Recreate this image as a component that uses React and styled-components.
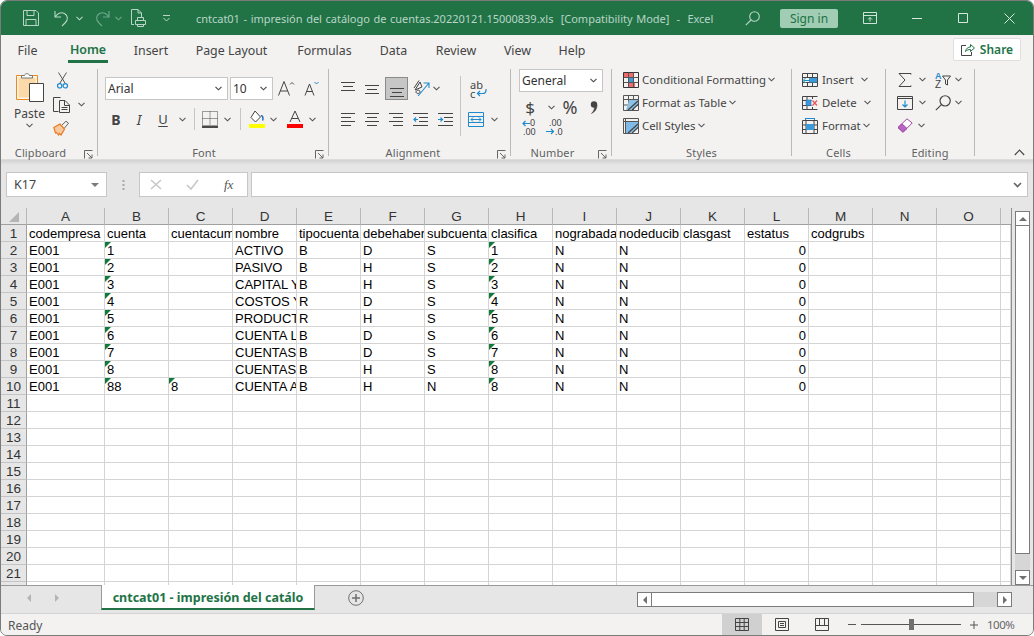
import React from 'react';
import styled, { createGlobalStyle } from 'styled-components';

const Global = createGlobalStyle`
html,body{margin:0;padding:0;background:#fff;}
body{font-family:"Noto Sans","Open Sans","Liberation Sans",sans-serif;}
*{box-sizing:border-box;}
svg{display:block;flex:none;overflow:visible;}
`;

const Win = styled.div`
width:1034px;height:636px;display:flex;flex-direction:column;overflow:hidden;
border:1px solid #7b7b7b;border-radius:7px;background:#e6e6e6;
`;

/* title bar */
const TitleBar = styled.div`
height:34px;background:#217346;display:flex;align-items:center;color:#b8d5c6;flex:none;
`;
const Qat = styled.div`width:195px;height:100%;display:flex;align-items:center;flex:none;padding-left:${p=>p.$pl}px;`;
const QatSlot = styled.div`
width:${p=>p.$w}px;display:flex;align-items:center;justify-content:center;gap:${p=>p.$gap||0}px;flex:none;margin-left:${p=>p.$ml||0}px;
`;
const TitleText = styled.div`font-size:11px;white-space:pre;width:545px;flex:none;letter-spacing:-.02px;word-spacing:.8px;`;
const TitleBtn = styled.div`
width:${p=>p.$w}px;height:100%;display:flex;align-items:center;justify-content:center;flex:none;
`;
const SignIn = styled.div`
width:58px;height:19px;margin:0 8px 0 16px;background:#a0cdb3;color:#217346;border-radius:2px;font-size:12px;
display:flex;align-items:center;justify-content:center;flex:none;
`;

/* ribbon tabs */
const TabRow = styled.div`
height:28px;background:#f3f2f1;display:flex;flex:none;padding-left:16px;
`;
const MenuTab = styled.div`
width:${p=>p.$w}px;height:28px;font-size:12.4px;color:#444;display:flex;align-items:center;justify-content:center;flex:none;
margin-right:${p=>p.$mr}px;padding-top:2px;
${p=>p.$on&&`color:#217346;font-weight:600;border-bottom:3px solid #217346;padding-top:3px;`}
`;
const Share = styled.div`
margin:3px 12px 0 auto;width:68px;height:23px;background:#fff;border:1px solid #e1dfdd;border-radius:2px;
display:flex;align-items:center;justify-content:center;gap:5px;font-size:12px;font-weight:600;color:#217346;
`;

/* ribbon */
const Ribbon = styled.div`
height:97px;background:#f3f2f1;display:flex;flex:none;border-bottom:1px solid #dcdcdc;
`;
const Group = styled.div`
width:${p=>p.$w}px;height:87px;margin-top:6px;border-right:1px solid #b9b9b9;display:flex;flex-direction:column;flex:none;
`;
const GroupBody = styled.div`
flex:1;display:flex;min-height:0;padding:${p=>p.$pad||'0'};
`;
const GroupLabel = styled.div`
height:14px;margin-bottom:-4px;font-size:11px;line-height:14px;color:#616161;text-align:center;position:relative;
letter-spacing:.15px;padding-right:${p=>p.$pr||0}px;
`;
const Launcher = styled.svg`position:absolute;right:4px;top:4px;`;
const Col = styled.div`
display:flex;flex-direction:column;width:${p=>p.$w?p.$w+'px':'auto'};flex:none;
margin-left:${p=>p.$ml||0}px;margin-top:${p=>p.$mt||0}px;padding-top:${p=>p.$pt||0}px;padding-left:${p=>p.$pl||0}px;
`;
const PasteBtn = styled.div`
width:46px;display:flex;flex-direction:column;align-items:center;padding:3px 0 0 11px;font-size:12px;color:#444;flex:none;
span{margin-top:3px;line-height:18px;}
`;
const Row = styled.div`
display:flex;align-items:center;height:${p=>p.$h||24}px;gap:${p=>p.$gap||0}px;margin-top:${p=>p.$mt||0}px;flex:none;
padding-left:${p=>p.$pl||0}px;
`;
const Combo = styled.div`
width:${p=>p.$w}px;height:${p=>p.$h||23}px;background:#fff;border:1px solid #c6c6c6;font-size:12px;color:#333;
display:flex;align-items:center;justify-content:space-between;padding:0 5px 0 2px;flex:none;
`;
const IconBtn = styled.div`
width:${p=>p.$w}px;height:${p=>p.$h||24}px;display:flex;align-items:center;justify-content:center;flex:none;
margin-left:${p=>p.$ml||0}px;
${p=>p.$on&&`background:#c6c6c6;border:1px solid #8a8a8a;`}
`;
const VSep = styled.div`
width:1px;height:${p=>p.$h||22}px;background:#c6c6c6;flex:none;margin:${p=>p.$m||'0'};
`;
const CmdRow = styled.div`
height:23px;display:flex;align-items:center;font-size:11.4px;color:#444;flex:none;white-space:nowrap;
svg:first-child{margin-right:${p=>p.$g||4}px;}
`;
const CmdChev = styled.span`margin-left:${p=>p.$ml||2}px;`;
const Collapse = styled.div`flex:1;display:flex;justify-content:flex-end;align-items:flex-end;padding:0 8px 3px 0;`;
const BoldGlyph = styled.span`font:700 14px "Noto Sans",sans-serif;color:#444;`;
const ItalicGlyph = styled.span`font:italic 14px "Noto Sans",sans-serif;color:#444;`;
const UnderGlyph = styled.span`font:13px "Noto Sans",sans-serif;color:#444;text-decoration:underline;text-underline-offset:2px;`;
const Dollar = styled.span`font-size:17px;color:#444;line-height:1;`;
const Percent = styled.span`font-size:18px;color:#444;line-height:1;`;

/* formula bar */
const FormulaRow = styled.div`
height:48px;flex:none;display:flex;align-items:flex-start;padding:12px 5px 0 5px;
background:linear-gradient(#d2d2d2 0,#e6e6e6 5px);
`;
const NameBox = styled.div`
width:101px;height:25px;background:#fff;border:1px solid #c6c6c6;font-size:12.5px;color:#444;
display:flex;align-items:center;justify-content:space-between;padding:0 7px;flex:none;
`;
const Grip = styled.div`width:32px;display:flex;justify-content:center;padding-top:8px;flex:none;`;
const FxBox = styled.div`
width:109px;height:25px;background:#fff;border:1px solid #c6c6c6;display:flex;align-items:center;flex:none;padding-left:10px;gap:24px;
`;
const Fx = styled.span`font:italic 13px "Liberation Serif",serif;color:#555;margin-left:1px;`;
const Input = styled.div`
flex:1;height:25px;margin-left:3px;background:#fff;border:1px solid #c6c6c6;display:flex;align-items:center;justify-content:flex-end;padding-right:5px;
`;

/* sheet */
const Sheet = styled.div`height:377px;display:flex;flex:none;`;
const Cells = styled.div`
width:1011px;height:377px;overflow:hidden;flex:none;display:grid;
grid-template-columns:26px 78px repeat(14,64px) 10px;grid-auto-rows:17px;background:#fff;
border-right:1px solid #8f8f8f;
font-family:"Liberation Sans",Arial,sans-serif;
`;
const ColHead = styled.div`
background:#e6e6e6;border-bottom:1px solid #a0a0a0;border-right:1px solid #b8b8b8;font-size:13.5px;color:#333;
display:flex;align-items:center;justify-content:center;height:17px;line-height:16px;padding-top:1px;
${p=>p.$plain&&`border-right:0;`}
`;
const RowHead = styled.div`
background:#e6e6e6;border-right:1px solid #a0a0a0;border-bottom:1px solid #c4c4c4;font-size:13.5px;color:#333;
display:flex;align-items:center;justify-content:center;line-height:16px;padding-top:1px;
`;
const Cell = styled.div`
border-right:1px solid #d4d4d4;border-bottom:1px solid #d4d4d4;font-size:13px;line-height:16px;color:#000;
padding:1px 2px 0;overflow:hidden;white-space:nowrap;position:relative;text-align:${p=>p.$right?'right':'left'};
${p=>p.$flag&&`&::before{content:"";position:absolute;left:0;top:0;border-style:solid;border-width:6px 6px 0 0;border-color:#0f7a3c transparent transparent transparent;}`}
`;
const VScroll = styled.div`
flex:1;display:flex;flex-direction:column;align-items:center;padding-top:3px;background:#e6e6e6;
`;
const ScrollTrack = styled.div`
width:15px;height:375px;background:#d6d6d6;display:flex;flex-direction:column;
`;
const ScrollBtn = styled.div`
width:15px;height:15px;background:#fff;border:1px solid #7b7b7b;display:flex;align-items:center;justify-content:center;flex:none;
`;
const VThumb = styled.div`width:15px;height:328px;background:#fff;border:1px solid #7b7b7b;border-top:0;flex:none;`;
const Spacer = styled.div`flex:1;`;

/* sheet tabs */
const SheetBar = styled.div`
height:28px;flex:none;display:flex;background:#e6e6e6;border-top:1px solid #9a9a9a;align-items:flex-start;
`;
const SheetNav = styled.div`width:100px;height:24px;display:flex;align-items:center;gap:24px;padding-left:26px;flex:none;`;
const SheetTab = styled.div`
width:214px;margin-top:-1px;height:25px;background:#fff;border:1px solid #9a9a9a;border-top:0;border-bottom:2px solid #217346;
display:flex;align-items:center;justify-content:center;font-size:12.5px;font-weight:700;color:#217346;flex:none;white-space:pre;padding-top:1px;
`;
const AddSheet = styled.div`width:81px;height:24px;display:flex;align-items:center;justify-content:center;flex:none;`;
const HScroll = styled.div`
width:375px;height:15px;margin:6px 21px 0 auto;display:flex;background:#d6d6d6;flex:none;
`;
const HThumb = styled.div`width:322px;height:15px;background:#fff;border:1px solid #7b7b7b;border-left:0;flex:none;`;

/* status */
const Status = styled.div`
height:22px;flex:none;display:flex;align-items:center;background:#f3f2f1;border-top:1px solid #d4d4d4;font-size:12px;color:#555;padding-left:7px;
`;
const Ready = styled.span`margin-top:1px;`;
const ViewBtn = styled.div`
width:40px;height:21px;display:flex;align-items:center;justify-content:center;flex:none;
${p=>p.$on&&`background:#d0d0d0;`}
`;
const Zoom = styled.div`display:flex;align-items:center;margin:0 20px 0 6px;flex:none;`;
const Slider = styled.div`
width:100px;height:1px;background:#555;margin:0 9px 0 5px;display:flex;align-items:center;padding-left:48px;
`;
const Knob = styled.div`width:5px;height:11px;background:#707070;flex:none;`;
const Pct = styled.div`margin-left:9px;width:26px;color:#666;font-size:11.5px;letter-spacing:-.5px;`;

const WrapText = styled.span`display:block;font-size:11px;line-height:9px;color:#444;width:15px;`;
const WrapBox = styled.div`display:flex;position:relative;width:15px;height:22px;align-items:center;`;
const WrapArrow = styled.svg`position:absolute;right:-2px;bottom:3px;`;

/* icons */
const Chev = ({c='#555'})=>(
  <svg width="7" height="5" viewBox="0 0 7 5"><path d="M.5.8 3.5 3.8 6.5.8" fill="none" stroke={c} strokeWidth="1.1"/></svg>
);
const Launch = ()=>(
  <Launcher width="9" height="9" viewBox="0 0 9 9"><path d="M.5 8.5V.5H8.5M3 3 8 8M8 4.5V8H4.5" fill="none" stroke="#666"/></Launcher>
);
const Lines = ({rows})=>(
  <svg width="16" height="22" viewBox="0 0 16 22">
    {rows.map((r,i)=><path key={i} d={`M${r[0]} ${r[2]+.5}H${r[1]}`} stroke="#444" fill="none"/>)}
  </svg>
);
const lineSet = (ys,kind)=>ys.map((y,i)=>{
  if(kind==='left') return [1,i%2?11:15,y];
  if(kind==='right') return [i%2?5:1,15,y];
  if(kind==='center') return [i%2?3:1,i%2?13:15,y];
  return [i===1?3:1,i===1?13:15,y];
});
const IndentIcon = ({dir})=>(
  <svg width="15" height="22" viewBox="0 0 15 22">
    <path d="M0 5.5H15M6 9.5H15M6 13.5H15M0 17.5H15" stroke="#444" fill="none"/>
    <path d={dir<0?"M5 11.5H1M3 9.5 1 11.5 3 13.5":"M0 11.5H4.5M2.5 9.5 4.500 11.5 2.500 13.5"} stroke="#1e8bcd" strokeWidth="1.2" fill="none"/>
  </svg>
);

const SaveIcon = ()=>(
  <svg width="16" height="16" viewBox="0 0 16 16" fill="none" stroke="#b8d5c6"><path d="M.5.5H13L15.5 3V15.5H.5ZM4 .5V5.5H11V.5M3 15.5V9.5H13V15.5"/></svg>
);
const UndoIcon = ({c})=>(
  <svg width="17" height="17" viewBox="0 0 17 17" fill="none" stroke={c} strokeWidth="1.1"><path d="M1 1V7H7M1.5 6.5C4 3 7.5 2 10.5 3.5 14 5.5 14.5 10 11 13L8 16"/></svg>
);
const RedoIcon = ({c})=>(
  <svg width="17" height="17" viewBox="0 0 17 17" fill="none" stroke={c} strokeWidth="1.1"><path d="M16 1V7H10M15.5 6.5C13 3 9.5 2 6.5 3.5 3 5.5 2.5 10 6 13L9 16"/></svg>
);
const PreviewIcon = ()=>(
  <svg width="15" height="18" viewBox="0 0 15 18" fill="none" stroke="#b8d5c6"><path d="M.5.5H7L10.5 4V8M7 .5V4H10.5M.5.5V15.5H3M4.5 11.5H14.5V15.5H4.5ZM6.5 11.5V8.5H12.5V11.5M6.5 15.5V17.5H12.5V15.5"/></svg>
);
const QatMore = ()=>(
  <svg width="9" height="7" viewBox="0 0 9 7" fill="none" stroke="#b8d5c6"><path d="M1 .5H8M1.5 3 4.5 6 7.5 3"/></svg>
);
const SearchIcon = ({c='#b8d5c6',s=15})=>(
  <svg width={s} height={s} viewBox="0 0 15 15" fill="none" stroke={c} strokeWidth="1.1"><circle cx="9.5" cy="5.5" r="4.8"/><path d="M6 9 .8 14.2"/></svg>
);
const DisplayIcon = ()=>(
  <svg width="14" height="12" viewBox="0 0 14 12" fill="none" stroke="#cfe3d8"><path d="M.5.5H13.5V11.5H.5ZM.5 3.5H13.5M7 9.5V5.5M5 7.5 7 5.5 9 7.5"/></svg>
);
const MinIcon = ()=>(<svg width="10" height="1" viewBox="0 0 10 1"><path d="M0 .5H10" stroke="#d8e8df"/></svg>);
const MaxIcon = ()=>(<svg width="10" height="10" viewBox="0 0 10 10"><path d="M.5.5H9.5V9.5H.5Z" fill="none" stroke="#d8e8df"/></svg>);
const CloseIcon = ()=>(<svg width="11" height="11" viewBox="0 0 11 11"><path d="M.5.5 10.5 10.5M10.5.5 .5 10.5" fill="none" stroke="#d8e8df"/></svg>);
const ShareIcon = ()=>(
  <svg width="14" height="13" viewBox="0 0 14 13" fill="none" stroke="#444"><path d="M5 2.5H.5V12.5H10.5V9"/><path d="M4.500 8.500C5 5.500 7 4 9.500 4V1.500L13.500 5 9.500 8.500V6.500C7.500 6.500 6 7 4.500 8.500Z" stroke="#217346"/></svg>
);
const PasteIcon = ()=>(
  <svg width="28" height="30" viewBox="0 0 28 30">
    <path d="M.5 3.500H21.500V27.500H.5Z" fill="#fdf6e6" stroke="#e8881f"/>
    <path d="M2.500 5.500H19.500V25.500H2.500Z" fill="#fbd9a8"/>
    <path d="M5.500 6V3.500H8.500C9 1 13 1 13.500 3.500H16.500V6Z" fill="#fff" stroke="#777"/>
    <path d="M13.500 11.500H27.500V29.500H13.500Z" fill="#fff" stroke="#444"/>
  </svg>
);
const CutIcon = ()=>(
  <svg width="11" height="17" viewBox="0 0 11 17" fill="none"><path d="M1.500.5 8 11M9.500.5 3 11" stroke="#555"/><circle cx="2.700" cy="13.800" r="2.200" stroke="#1e8bcd" strokeWidth="1.200"/><circle cx="8.300" cy="13.800" r="2.200" stroke="#1e8bcd" strokeWidth="1.200"/></svg>
);
const CopyIcon = ()=>(
  <svg width="17" height="17" viewBox="0 0 17 17" fill="none" stroke="#444"><path d="M5.500 15.500H.5V1.500H7.500M6.500 4.500H12L16.500 9V16.500H6.500ZM11.500 4.500V9.500H16.500M8.500 11.500H14.500M8.500 13.500H14.500"/></svg>
);
const PainterIcon = ()=>(
  <svg width="17" height="16" viewBox="0 0 17 16"><path d="M9 5 13 1.200 15.500 3.200 11.500 8" fill="#f3f2f1" stroke="#666"/><path d="M.8 7.500 7 4 11.500 9 8 15 6.500 13.500 5.500 15 3.500 12.500 2.500 13 .8 7.500Z" fill="#f7c99e" stroke="#e8781f" strokeWidth="1.200"/></svg>
);
const GrowIcon = ({up})=>(
  <svg width="17" height="15" viewBox="0 0 17 15" fill="none"><path d={up?"M.5 14.500 6 .5 11.500 14.500M2.500 10H9.500":"M2 14.500 6.500 3 11 14.500M3.500 10.500H9.500"} stroke="#444"/><path d={up?"M12 3.500 14 1.500 16 3.500":"M11.500 1 13.500 3 15.500 1"} stroke={up?'#555':'#1e8bcd'}/></svg>
);
const BorderIcon = ()=>(
  <svg width="16" height="17" viewBox="0 0 16 17" fill="none"><path d="M.5.5H15.500V14.500H.5ZM8 .5V14.500M.5 7.500H15.500" stroke="#444" strokeDasharray="1 1"/><path d="M0 16H16" stroke="#111" strokeWidth="1.500"/></svg>
);
const FillIcon = ()=>(
  <svg width="16" height="18" viewBox="0 0 16 18"><path d="M6 1 11.500 7 6.500 12 2 7.500Z" fill="#fff" stroke="#444"/><path d="M12 6C14 5 14.500 9 13.500 10.500" stroke="#1e6fb8" strokeWidth="1.500" fill="none"/><rect y="14" width="16" height="4" fill="#ffff00"/></svg>
);
const FontColorIcon = ()=>(
  <svg width="16" height="18" viewBox="0 0 16 18" fill="none"><path d="M3 12 8 1 13 12M5 8.500H11" stroke="#444"/><rect y="14" width="16" height="4" fill="#ff0000"/></svg>
);
const OrientIcon = ()=>(
  <svg width="18" height="17" viewBox="0 0 18 17" fill="none"><path d="M1 9 6 1.500M2 11 7 3 9 8ZM3 13C3 11 7 10 7 13 7 15 3 15 3 13Z" stroke="#444" transform="translate(0 -1)"/><path d="M5 16 16 3M10.500 3H16V8" stroke="#1e8bcd" strokeWidth="1.100"/></svg>
);
const MergeIcon = ()=>(
  <svg width="16" height="15" viewBox="0 0 16 15" fill="none"><path d="M.5.5H15.500V14.500H.5ZM.5 4.500H15.500M.5 10.500H15.500" stroke="#1e8bcd"/><path d="M3 7.500H13M5 5.500 3 7.500 5 9.500M11 5.500 13 7.500 11 9.500" stroke="#1e8bcd"/></svg>
);
const DecIcon = ({more})=>(
  <svg width="16" height="18" viewBox="0 0 16 18" fill="none">
    <text x={more?3:8} y="7" fontSize="9" fill="#444" fontFamily="Noto Sans">{more?'.00':'0'}</text>
    <text x={more?9:1} y="16" fontSize="9" fill="#444" fontFamily="Noto Sans">{more?'.0':'.00'}</text>
    <path d={more?"M0 12.500H7M5 10 7.500 12.500 5 15":"M8 4.500H1M3.500 2 1 4.500 3.500 7"} stroke="#1e8bcd" strokeWidth="1.200"/>
  </svg>
);
const CommaIcon = ()=>(
  <svg width="8" height="13" viewBox="0 0 8 13"><circle cx="4" cy="3.500" r="3.200" fill="#444"/><path d="M7 4C7 8 5 11 1.500 12.500 4 10 4.500 8 4.500 6" fill="#444" stroke="#444" strokeWidth=".6"/></svg>
);
const CondIcon = ()=>(
  <svg width="16" height="16" viewBox="0 0 16 16" fill="none"><path d="M.5.5H15.500V15.500H.5Z" stroke="#333"/><rect x="1" y="1" width="5" height="4" fill="#ef6a6a"/><rect x="5" y="1" width="5" height="4" fill="#ef6a6a"/><rect x="5" y="10.500" width="7" height="4.500" fill="#ef6a6a"/><path d="M5.500.5V15.500M10.500.5V15.500M.5 5.500H15.500M.5 10.500H15.500" stroke="#555"/><rect x="6" y="6" width="4" height="4" fill="#3d9ad8"/></svg>
);
const TableIcon = ()=>(
  <svg width="16" height="16" viewBox="0 0 16 16" fill="none"><path d="M.5.5H15.500V15.500H.5ZM.5 4.500H15.500M5.500.5V15.500M10.500.5V15.500M.5 10H15.500" stroke="#555"/><path d="M6 5 15 5V10L8 15H3Z" fill="#8cc1e8"/><path d="M15 6 5 15M15.500 9 9 15" stroke="#444" strokeWidth="1.200"/></svg>
);
const StyleIcon = ()=>(
  <svg width="16" height="16" viewBox="0 0 16 16" fill="none"><path d="M.5.5H15.500V15.500H.5ZM.5 3.500H15.500M2.500.5V15.500" stroke="#555"/><path d="M3 4H15V9L8 15H3Z" fill="#7fbbe6"/><path d="M15 6 5 15M15.500 9 9 15" stroke="#444" strokeWidth="1.200"/></svg>
);
const InsertIcon = ()=>(
  <svg width="16" height="14" viewBox="0 0 16 14" fill="none"><path d="M.5.5H15.500V13.500H.5ZM.5 4.500H15.500M.5 9.500H15.500M5.500.5V4M5.500 10V13.500M10.500.5V13.500" stroke="#444"/><rect x="7" y="5" width="8" height="4.500" fill="#3d9ad8"/><path d="M8 7.500H1.500M3.500 5 1 7.500 3.500 10" stroke="#1e8bcd" fill="#f3f2f1"/></svg>
);
const DeleteIcon = ()=>(
  <svg width="16" height="14" viewBox="0 0 16 14" fill="none"><path d="M.5.5H15.500M.5 13.500H15.500M.5.5V13.500M.5 4.500H9.500M.5 9.500H9.500M5 .5V4M5 10V13.500M10.500.5V3M10.500 11V13.500" stroke="#444"/><rect x="4" y="4" width="5" height="5.500" fill="#3d9ad8" stroke="#1e6fb8" strokeWidth=".6"/><path d="M10.500 4.500 15 9.500M15 4.500 10.500 9.500" stroke="#e85757" strokeWidth="1.300"/></svg>
);
const FormatIcon = ()=>(
  <svg width="16" height="16" viewBox="0 0 16 16" fill="none"><path d="M.5 2.500H15.500V15.500H.5ZM.5 7H15.500M.5 11.500H15.500M4 2.500V15.500M12 2.500V15.500" stroke="#444"/><rect x="4" y="6" width="8" height="6" fill="#3d9ad8"/><path d="M3.500.5H12.500M3.500 0V2M12.500 0V2" stroke="#1e8bcd"/></svg>
);
const SumIcon = ()=>(
  <svg width="14" height="14" viewBox="0 0 14 14" fill="none"><path d="M13 1.500V.5H1L7 7 1 13.500H13V12.500" stroke="#444"/></svg>
);
const SortIcon = ()=>(
  <svg width="16" height="17" viewBox="0 0 16 17" fill="none"><text x="0" y="8" fontSize="9" fontWeight="700" fill="#1e8bcd" fontFamily="Liberation Sans">A</text><text x="0" y="17" fontSize="10" fill="#444" fontFamily="Liberation Sans">Z</text><path d="M7.500 5H15.500L12.500 9V14L10.500 13V9Z" stroke="#444"/></svg>
);
const FillDownIcon = ()=>(
  <svg width="16" height="14" viewBox="0 0 16 14" fill="none"><path d="M.5.500H15.500V13.500H.5ZM.5 2.500H15.500" stroke="#444"/><path d="M8 4.500V11M5.500 8.500 8 11 10.500 8.500" stroke="#1e8bcd" strokeWidth="1.200"/></svg>
);
const EraserIcon = ()=>(
  <svg width="16" height="15" viewBox="0 0 16 15"><path d="M10 .8 15.200 5 6 14.200 1 9.500Z" fill="#fff" stroke="#a349a4"/><path d="M5 5.800 10 10.500 6 14.200 1 9.500Z" fill="#b865c6" stroke="#a349a4"/></svg>
);
const NormalIcon = ()=>(
  <svg width="14" height="13" viewBox="0 0 14 13" fill="none" stroke="#444"><path d="M.5.500H13.500V12.500H.5ZM.5 4.500H13.500M.5 8.500H13.500M4.800.5V12.500M9.200.5V12.500"/></svg>
);
const PageIcon = ()=>(
  <svg width="14" height="13" viewBox="0 0 14 13" fill="none" stroke="#444"><path d="M.5.500H13.500V12.500H.5ZM3.500 3.500H10.500V9.500H3.500ZM5 5.500H9M5 7.500H9"/></svg>
);
const BreakIcon = ()=>(
  <svg width="14" height="13" viewBox="0 0 14 13" fill="none" stroke="#444"><path d="M.5.500H13.500V12.500H.5ZM.5 7.500H13.500M4.500.5V7.500M9.500.5V7.500"/></svg>
);
const Tri = ({d,c='#707070',s=5})=>{
  const shapes={up:`M0 ${s}H${s*2}L${s} 0Z`,down:`M0 0H${s*2}L${s} ${s}Z`,left:`M${s} 0V${s*2}L0 ${s}Z`,right:`M0 0V${s*2}L${s} ${s}Z`};
  const horiz=d==='up'||d==='down';
  return <svg width={horiz?s*2:s} height={horiz?s:s*2}><path d={shapes[d]} fill={c}/></svg>;
};

const tabs=[['File',21,30],['Home',40,25],['Insert',36,25],['Page Layout',75,27],['Formulas',57,25],['Data',31,25],['Review',44,24],['View',31,24],['Help',30,0]];
const letters='ABCDEFGHIJKLMNO'.split('');
const head=['codempresa','cuenta','cuentacum','nombre','tipocuenta','debehaber','subcuenta','clasifica','nograbada','nodeducib','clasgast','estatus','codgrubs'];
const names=['ACTIVO','PASIVO','CAPITAL Y','COSTOS Y','PRODUCTOS','CUENTA L','CUENTAS','CUENTAS','CUENTA A'];
const rows=[
  ['1','','B','D','S','1'],['2','','B','H','S','2'],['3','','B','H','S','3'],['4','','R','D','S','4'],
  ['5','','R','H','S','5'],['6','','B','D','S','6'],['7','','B','D','S','7'],['8','','B','H','S','8'],['88','8','B','H','N','8'],
];

const SheetRow = ({n})=>{
  const r=rows[n-2];
  const vals=n===1?head:r?['E001',r[0],r[1],names[n-2],r[2],r[3],r[4],r[5],'N','N','','0','']:Array(13).fill('');
  return (
    <>
      <RowHead>{n<22?n:''}</RowHead>
      {vals.map((v,i)=>(
        <Cell key={i} $right={n>1&&i===11} $flag={n>1&&r&&((i===1)||(i===7)||(i===2&&v!==''))}>{v}</Cell>
      ))}
      <Cell/><Cell/><Cell/>
    </>
  );
};

export default function App(){
  return (
    <Win>
      <Global/>
      <TitleBar>
        <Qat $pl={19}>
          <QatSlot $w={21}><SaveIcon/></QatSlot>
          <QatSlot $w={39} $gap={5} $ml={8}><UndoIcon c="#b8d5c6"/><Chev c="#b8d5c6"/></QatSlot>
          <QatSlot $w={38} $gap={5}><RedoIcon c="#6fa78b"/><Chev c="#6fa78b"/></QatSlot>
          <QatSlot $w={24}><PreviewIcon/></QatSlot>
          <QatSlot $w={32}><QatMore/></QatSlot>
        </Qat>
        <TitleText>cntcat01 - impresión del catálogo de cuentas.20220121.15000839.xls  [Compatibility Mode]  -  Excel</TitleText>
        <TitleBtn $w={23}><SearchIcon/></TitleBtn>
        <SignIn>Sign in</SignIn>
        <TitleBtn $w={48}><DisplayIcon/></TitleBtn>
        <TitleBtn $w={46}><MinIcon/></TitleBtn>
        <TitleBtn $w={46}><MaxIcon/></TitleBtn>
        <TitleBtn $w={46}><CloseIcon/></TitleBtn>
      </TitleBar>

      <TabRow>
        {tabs.map(t=><MenuTab key={t[0]} $w={t[1]} $mr={t[2]} $on={t[0]==='Home'}>{t[0]}</MenuTab>)}
        <Share><ShareIcon/>Share</Share>
      </TabRow>

      <Ribbon>
        <Group $w={97}>
          <GroupBody>
            <PasteBtn><PasteIcon/><span>Paste</span><Chev/></PasteBtn>
            <Col $ml={6} $pt={3}>
              <IconBtn $w={20} $h={17} $ml={-1}><CutIcon/></IconBtn>
              <Row $h={17} $mt={7} $gap={8}><CopyIcon/><Chev/></Row>
              <Row $h={16} $mt={7}><PainterIcon/></Row>
            </Col>
          </GroupBody>
          <GroupLabel $pr={17}>Clipboard<Launch/></GroupLabel>
        </Group>

        <Group $w={231}>
          <GroupBody>
            <Col $pl={7}>
              <Row $h={23} $mt={8} $gap={2}>
                <Combo $w={123}>Arial<Chev c="#444"/></Combo>
                <Combo $w={43}>10<Chev c="#444"/></Combo>
                <IconBtn $w={17} $ml={3}><GrowIcon up/></IconBtn>
                <IconBtn $w={17} $ml={6}><GrowIcon/></IconBtn>
              </Row>
              <Row $h={24} $mt={7}>
                <IconBtn $w={22}><BoldGlyph>B</BoldGlyph></IconBtn>
                <IconBtn $w={24}><ItalicGlyph>I</ItalicGlyph></IconBtn>
                <IconBtn $w={24}><UnderGlyph>U</UnderGlyph></IconBtn>
                <IconBtn $w={14}><Chev/></IconBtn>
                <VSep $m="0 7px 0 5px"/>
                <IconBtn $w={16}><BorderIcon/></IconBtn>
                <IconBtn $w={18}><Chev/></IconBtn>
                <VSep $m="0 7px 0 4px"/>
                <IconBtn $w={17}><FillIcon/></IconBtn>
                <IconBtn $w={16}><Chev/></IconBtn>
                <IconBtn $w={16} $ml={6}><FontColorIcon/></IconBtn>
                <IconBtn $w={18}><Chev/></IconBtn>
              </Row>
            </Col>
          </GroupBody>
          <GroupLabel $pr={18}>Font<Launch/></GroupLabel>
        </Group>

        <Group $w={182}>
          <GroupBody>
            <Col $pl={10}>
              <Row $h={23} $mt={8}>
                <IconBtn $w={18} $h={23}><Lines rows={lineSet([4,8,12],'top')}/></IconBtn>
                <IconBtn $w={24} $h={23} $ml={3}><Lines rows={lineSet([7,11,15],'top')}/></IconBtn>
                <IconBtn $on $w={23} $h={23} $ml={1}><Lines rows={lineSet([10,14,18],'top')}/></IconBtn>
                <IconBtn $w={19} $h={23} $ml={4}><OrientIcon/></IconBtn>
                <IconBtn $w={10} $h={23}><Chev/></IconBtn>
              </Row>
              <Row $h={24} $mt={7}>
                <IconBtn $w={18}><Lines rows={lineSet([5,9,13,17],'left')}/></IconBtn>
                <IconBtn $w={24} $ml={3}><Lines rows={lineSet([5,9,13,17],'center')}/></IconBtn>
                <IconBtn $w={24}><Lines rows={lineSet([5,9,13,17],'right')}/></IconBtn>
                <IconBtn $w={25}><IndentIcon dir={-1}/></IconBtn>
                <IconBtn $w={24}><IndentIcon dir={1}/></IconBtn>
              </Row>
            </Col>
            <VSep $h={60} $m="7px 0 0 3px"/>
            <Col $ml={7} $pt={8}>
              <Row $h={23} $pl={2}>
                <WrapBox>
                  <WrapText>ab<br/>c</WrapText>
                  <WrapArrow width="11" height="9" viewBox="0 0 11 9" fill="none"><path d="M10 1V2.500C10 4.500 8.500 5.500 7 5.500H1.500M4 3 1.500 5.500 4 8" stroke="#1e8bcd" strokeWidth="1.200"/></WrapArrow>
                </WrapBox>
              </Row>
              <Row $h={24} $mt={7} $gap={7}><MergeIcon/><Chev/></Row>
            </Col>
          </GroupBody>
          <GroupLabel $pr={13}>Alignment<Launch/></GroupLabel>
        </Group>

        <Group $w={101}>
          <GroupBody>
            <Col $pl={8}>
              <Combo $w={84} $h={23}>General<Chev c="#444"/></Combo>
              <Row $h={24} $mt={3}>
                <IconBtn $w={22}><Dollar>$</Dollar></IconBtn>
                <IconBtn $w={14} $ml={3}><Chev/></IconBtn>
                <IconBtn $w={26} $ml={-1}><Percent>%</Percent></IconBtn>
                <IconBtn $w={22}><CommaIcon/></IconBtn>
              </Row>
              <Row $h={18} $gap={8} $pl={3}><DecIcon/><DecIcon more/></Row>
            </Col>
          </GroupBody>
          <GroupLabel $pr={17}>Number<Launch/></GroupLabel>
        </Group>

        <Group $w={180}>
          <GroupBody $pad="0 0 0 11px">
            <Col $mt={-1}>
              <CmdRow $g={3}><CondIcon/>Conditional Formatting<CmdChev><Chev/></CmdChev></CmdRow>
              <CmdRow $g={3}><TableIcon/>Format as Table<CmdChev><Chev/></CmdChev></CmdRow>
              <CmdRow $g={3}><StyleIcon/>Cell Styles<CmdChev $ml={3}><Chev/></CmdChev></CmdRow>
            </Col>
          </GroupBody>
          <GroupLabel>Styles</GroupLabel>
        </Group>

        <Group $w={94}>
          <GroupBody $pad="0 0 0 10px">
            <Col $mt={-1}>
              <CmdRow><InsertIcon/>Insert<CmdChev $ml={7}><Chev/></CmdChev></CmdRow>
              <CmdRow><DeleteIcon/>Delete<CmdChev $ml={7}><Chev/></CmdChev></CmdRow>
              <CmdRow><FormatIcon/>Format<CmdChev><Chev/></CmdChev></CmdRow>
            </Col>
          </GroupBody>
          <GroupLabel>Cells</GroupLabel>
        </Group>

        <Group $w={89}>
          <GroupBody $pad="0 0 0 11px">
            <Col $w={38} $mt={-1}>
              <Row $h={23} $gap={7} $pl={1}><SumIcon/><Chev/></Row>
              <Row $h={23} $gap={6}><FillDownIcon/><Chev/></Row>
              <Row $h={23} $gap={5}><EraserIcon/><Chev/></Row>
            </Col>
            <Col $mt={-1}>
              <Row $h={23} $gap={4}><SortIcon/><Chev/></Row>
              <Row $h={23} $gap={4}><SearchIcon c="#444" s={16}/><Chev/></Row>
            </Col>
          </GroupBody>
          <GroupLabel>Editing</GroupLabel>
        </Group>

        <Collapse>
          <svg width="11" height="7" viewBox="0 0 11 7"><path d="M.8 6 5.500 1 10.200 6" fill="none" stroke="#444" strokeWidth="1.100"/></svg>
        </Collapse>
      </Ribbon>

      <FormulaRow>
        <NameBox>K17<Tri d="down" c="#7a7a7a" s={4}/></NameBox>
        <Grip><svg width="3" height="10" viewBox="0 0 3 10"><path d="M1.500 0V2M1.500 4V6M1.500 8V10" stroke="#a8a8a8" strokeWidth="2"/></svg></Grip>
        <FxBox>
          <svg width="12" height="11" viewBox="0 0 12 11"><path d="M1 1 11 10M11 1 1 10" stroke="#c8c8c8" strokeWidth="1.600"/></svg>
          <svg width="13" height="11" viewBox="0 0 13 11"><path d="M1 6 5 10 12 1" fill="none" stroke="#c8c8c8" strokeWidth="1.600"/></svg>
          <Fx>fx</Fx>
        </FxBox>
        <Input><svg width="9" height="6" viewBox="0 0 9 6"><path d="M1 1 4.500 4.500 8 1" fill="none" stroke="#666" strokeWidth="1.600"/></svg></Input>
      </FormulaRow>

      <Sheet>
        <Cells>
          <ColHead>
            <svg width="10" height="10" viewBox="0 0 10 10"><path d="M10 0V10H0Z" fill="#b5b5b5"/></svg>
          </ColHead>
          {letters.map(l=><ColHead key={l}>{l}</ColHead>)}
          <ColHead $plain/>
          {Array.from({length:22},(_,i)=><SheetRow key={i} n={i+1}/>)}
        </Cells>
        <VScroll>
          <ScrollTrack>
            <ScrollBtn><Tri d="up" s={4}/></ScrollBtn>
            <VThumb/>
            <Spacer/>
            <ScrollBtn><Tri d="down" s={4}/></ScrollBtn>
          </ScrollTrack>
        </VScroll>
      </Sheet>

      <SheetBar>
        <SheetNav><Tri d="left" c="#b4b4b4" s={4}/><Tri d="right" c="#b4b4b4" s={4}/></SheetNav>
        <SheetTab>cntcat01 - impresión del catálo</SheetTab>
        <AddSheet>
          <svg width="16" height="16" viewBox="0 0 16 16" fill="none" stroke="#707070"><circle cx="8" cy="8" r="7.300"/><path d="M4 8H12M8 4V12" strokeWidth="1.500"/></svg>
        </AddSheet>
        <HScroll>
          <ScrollBtn><Tri d="left" s={4}/></ScrollBtn>
          <HThumb/>
          <Spacer/>
          <ScrollBtn><Tri d="right" s={4}/></ScrollBtn>
        </HScroll>
      </SheetBar>

      <Status>
        <Ready>Ready</Ready>
        <Spacer/>
        <ViewBtn $on><NormalIcon/></ViewBtn>
        <ViewBtn><PageIcon/></ViewBtn>
        <ViewBtn><BreakIcon/></ViewBtn>
        <Zoom>
          <svg width="8" height="1"><path d="M0 .5H8" stroke="#555"/></svg>
          <Slider><Knob/></Slider>
          <svg width="8" height="8" viewBox="0 0 8 8"><path d="M0 4H8M4 0V8" stroke="#555"/></svg>
          <Pct>100%</Pct>
        </Zoom>
      </Status>
    </Win>
  );
}
